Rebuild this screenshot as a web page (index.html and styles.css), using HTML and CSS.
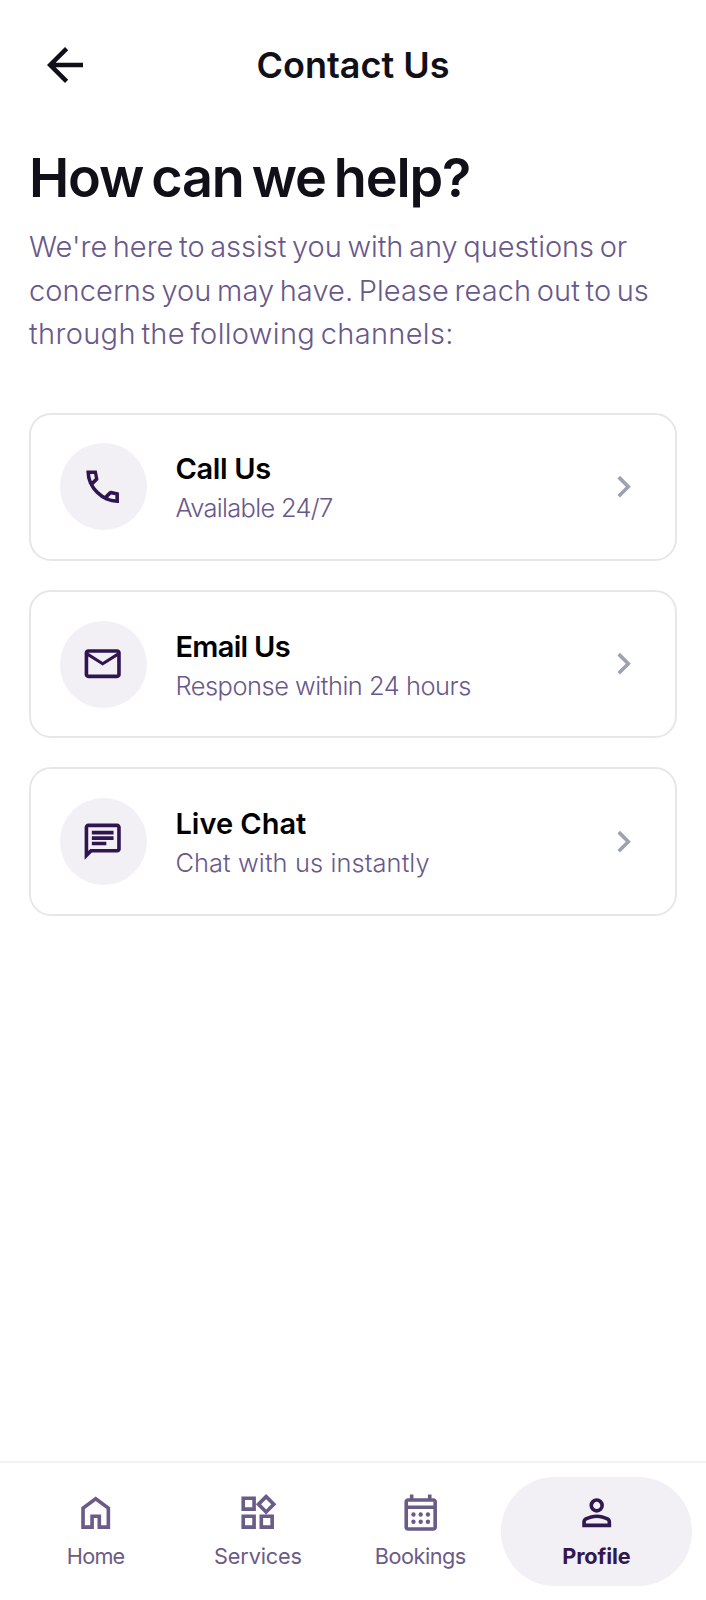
FILE: index.html
```html
<!DOCTYPE html>
<html lang="en">
<head>
<meta charset="utf-8">
<title>Contact Us</title>
<link rel="stylesheet" href="styles.css">
</head>
<body>
<div class="screen">
  <header class="header">
    <button class="back" aria-label="Back"><svg class="back-icon" viewBox="0 0 24 24"><path d="M7.825 13l5.6 5.6L12 20l-8-8 8-8 1.425 1.4-5.6 5.6H20v2z"/></svg></button>
    <h1 class="title">Contact Us</h1>
  </header>
  <main class="main">
    <h2 class="heading">How can we help?</h2>
    <p class="intro">
      <span class="line line-a">We're here to assist you with any questions or</span>
      <span class="line line-b">concerns you may have. Please reach out to us</span>
      <span class="line line-c">through the following channels:</span>
    </p>
    <div class="cards">
      <a class="card card-call">
        <span class="badge"><svg class="icon" viewBox="0 0 24 24"><path d="M21 21h-1.05q-3.125 0-6.175-1.363t-5.55-3.862-3.862-5.55T3 4.05V3h5.7l.9 4.6q.05.4-.025.675T9.4 8.45L6.975 10.9q.5.925 1.188 1.787t1.512 1.663q.775.775 1.625 1.438T13.1 17l2.35-2.35q.225-.225.588-.337t.712-.063L21 15.2zM6.025 9l1.65-1.65L7.25 5H5.025q.125 1.025.35 2.025T6.025 9m8.95 8.95q.975.425 1.988.675T19 18.95v-2.2l-2.35-.475z"/></svg></span>
        <span class="copy"><span class="name">Call Us</span><span class="note">Available 24/7</span></span>
        <svg class="icon chevron" viewBox="0 0 24 24"><path d="M12.6 12 8 7.4 9.4 6l6 6-6 6L8 16.6z"/></svg>
      </a>
      <a class="card card-email">
        <span class="badge"><svg class="icon" viewBox="0 0 24 24"><path d="M4 20q-.825 0-1.412-.587T2 18V6q0-.825.588-1.412T4 4h16q.825 0 1.413.588T22 6v12q0 .825-.587 1.413T20 20zm8-7L4 8v10h16V8zm0-2 8-5H4zM4 8V6v12z"/></svg></span>
        <span class="copy"><span class="name">Email Us</span><span class="note">Response within 24 hours</span></span>
        <svg class="icon chevron" viewBox="0 0 24 24"><path d="M12.6 12 8 7.4 9.4 6l6 6-6 6L8 16.6z"/></svg>
      </a>
      <a class="card card-chat">
        <span class="badge"><svg class="icon" viewBox="0 0 24 24"><path d="M6 14h8v-2H6zm0-3h12V9H6zm0-3h12V6H6zM2 22V4q0-.825.588-1.412T4 2h16q.825 0 1.413.588T22 4v12q0 .825-.587 1.413T20 18H6zm3.15-6H20V4H4v13.125z"/></svg></span>
        <span class="copy"><span class="name">Live Chat</span><span class="note">Chat with us instantly</span></span>
        <svg class="icon chevron" viewBox="0 0 24 24"><path d="M12.6 12 8 7.4 9.4 6l6 6-6 6L8 16.6z"/></svg>
      </a>
    </div>
  </main>
  <nav class="nav">
    <a class="tab tab-home"><svg class="icon" viewBox="0 0 24 24"><path d="M6 19h3v-6h6v6h3v-9l-6-4.5L6 10zm-2 2V9l8-6 8 6v12h-7v-6h-2v6z"/></svg><span class="label">Home</span></a>
    <a class="tab tab-services"><svg class="icon" viewBox="0 0 24 24"><path d="M16.65 13 11 7.35l5.65-5.65 5.65 5.65zM3 11V3h8v8zm10 10v-8h8v8zM3 21v-8h8v8zM5 9h4V5H5zm11.675 1.2L19.5 7.375 16.675 4.55 13.85 7.375zM15 19h4v-4h-4zM5 19h4v-4H5z"/></svg><span class="label">Services</span></a>
    <a class="tab tab-bookings"><svg class="icon" viewBox="0 0 24 24"><path d="M5 22q-.825 0-1.412-.587T3 20V6q0-.825.588-1.412T5 4h1V2h2v2h8V2h2v2h1q.825 0 1.413.588T21 6v14q0 .825-.587 1.413T19 22zm0-2h14V10H5zM5 8h14V6H5z"/><circle cx="8" cy="13" r="1.2"/><circle cx="12" cy="13" r="1.2"/><circle cx="16" cy="13" r="1.2"/><circle cx="8" cy="17" r="1.2"/><circle cx="12" cy="17" r="1.2"/><circle cx="16" cy="17" r="1.2"/></svg><span class="label">Bookings</span></a>
    <a class="tab tab-active"><svg class="icon" viewBox="0 0 24 24"><path d="M12 12q-1.65 0-2.825-1.175T8 8t1.175-2.825T12 4t2.825 1.175T16 8t-1.175 2.825T12 12m-8 8v-2.8q0-.85.438-1.562T5.6 14.55q1.55-.775 3.15-1.163T12 13t3.25.388 3.15 1.162q.725.375 1.163 1.088T20 17.2V20zm2-2h12v-.8q0-.275-.137-.5t-.363-.35q-1.35-.675-2.725-1.012T12 15t-2.775.338T6.5 16.35q-.225.125-.363.35T6 17.2zm6-8q.825 0 1.413-.587T14 8t-.587-1.412T12 6t-1.412.588T10 8t.588 1.413T12 10"/></svg><span class="label">Profile</span></a>
  </nav>
</div>
</body>
</html>
```
FILE: styles.css
```css
* { box-sizing: border-box; }
body { margin: 0; background: #fff; font-family: Inter, "Open Sans", sans-serif; }
.screen { height: 1600px; display: flex; flex-direction: column; background: #fff; }
.header { height: 130px; padding: 0 28.5px; display: grid; grid-template-columns: 72px 1fr 72px; align-items: center; }
.back { height: 72px; padding: 0; border: 0; background: none; display: flex; align-items: center; justify-content: center; }
.back-icon { width: 54px; height: 54px; fill: #110f17; }
.title { margin: 0; text-align: center; font-size: 36px; font-weight: 600; line-height: 50px; color: #110f17; }
.main { flex: 1; padding: 14px 29px 0; }
.heading { margin: 0; font-size: 54px; font-weight: 600; letter-spacing: -1.15px; word-spacing: -4.5px; line-height: 68px; color: #110f17; white-space: nowrap; }
.intro { margin: 13px 0 0; font-size: 29px; font-weight: 300; line-height: 43.5px; color: #69588a; }
.line { display: block; white-space: nowrap; }
.line-a { letter-spacing: -0.02px; word-spacing: -2.5px; }
.line-b { letter-spacing: 0.08px; word-spacing: -2.7px; }
.line-c { letter-spacing: 0.33px; word-spacing: -2.9px; }
.cards { margin-top: 57px; display: flex; flex-direction: column; gap: 29px; }
.card { height: 148.4px; padding: 0 28.8px; border: 2px solid #e5e7eb; border-radius: 22px; display: flex; align-items: center; gap: 28.8px; }
.badge { width: 87px; height: 87px; border-radius: 50%; background: #f2f0f5; color: #2f1650; display: flex; align-items: center; justify-content: center; }
.icon { width: 43.4px; height: 43.4px; flex: none; fill: currentColor; display: block; }
.badge .icon { margin: 0 0 0 -0.6px; }
.chevron { color: #9ca3af; }
.copy { flex: 1; display: flex; flex-direction: column; white-space: nowrap; margin-left: -0.2px; }
.name { font-size: 29px; font-weight: 600; line-height: 43px; color: #000; }
.note { font-size: 25.4px; font-weight: 300; line-height: 36px; color: #69588a; }
.card-call .name { letter-spacing: -0.35px; }
.card-email .name { letter-spacing: -0.7px; }
.card-call .note { letter-spacing: -0.65px; }
.card-email .note { letter-spacing: -0.46px; }
.card-chat .note { letter-spacing: 0.11px; }
.nav { height: 139.5px; padding: 14px 14.5px 14.5px; border-top: 2px solid #f3f3f5; display: grid; grid-template-columns: 162.3px 162.3px 162.3px 1fr; }
.tab { display: flex; flex-direction: column; align-items: center; padding-top: 14px; color: #6b5b87; }
.label { font-size: 21.7px; line-height: 29px; margin-top: 8px; }
.tab-home .label { letter-spacing: -0.8px; }
.tab-services .label { letter-spacing: -0.15px; }
.tab-bookings .label { letter-spacing: -0.5px; }
.tab-active { background: #f2f0f5; border-radius: 54px; color: #33184f; }
.tab-active .label { font-weight: 700; letter-spacing: -0.1px; }
```
